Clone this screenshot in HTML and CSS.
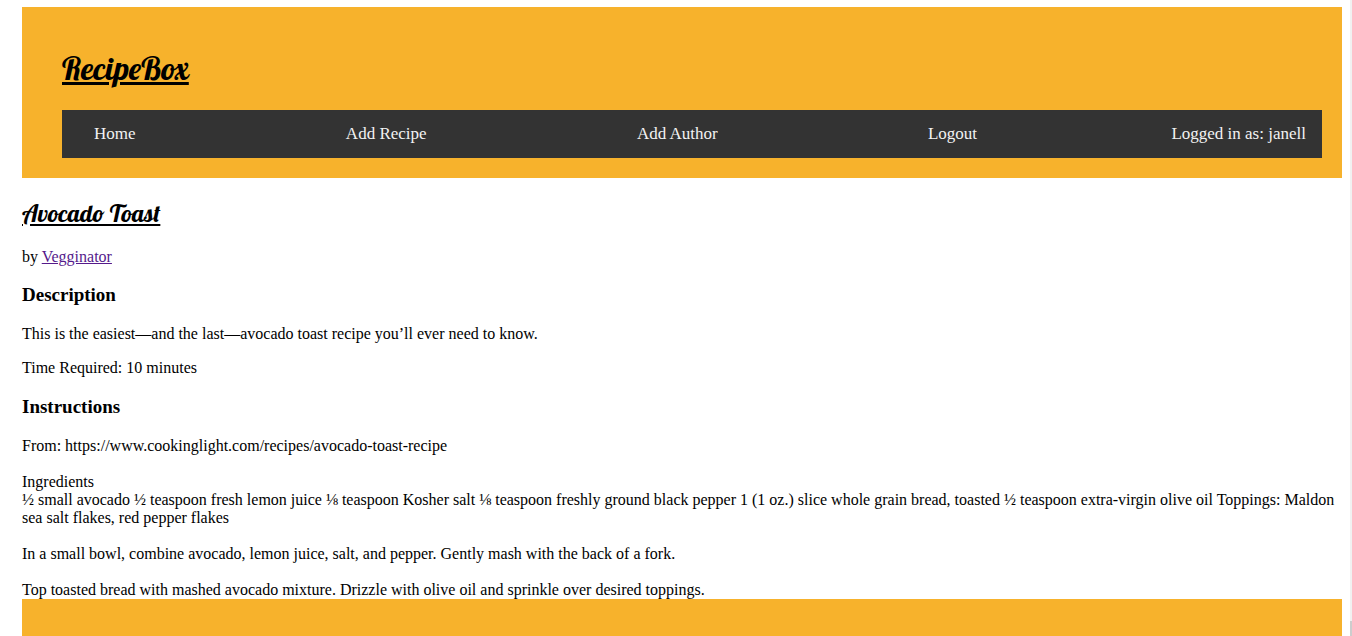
FILE: index.html
```html
<!DOCTYPE html>
<html lang="en">
<head>
<meta charset="utf-8">
<title>RecipeBox</title>
<link rel="stylesheet" href="styles.css">
</head>
<body>
<header class="banner">
  <h1 class="brand">RecipeBox</h1>
  <nav class="nav">
    <a class="nav-link" href="#">Home</a>
    <a class="nav-link" href="#">Add Recipe</a>
    <a class="nav-link" href="#">Add Author</a>
    <a class="nav-link" href="#">Logout</a>
    <span class="nav-user">Logged in as: janell</span>
  </nav>
</header>
<main class="recipe">
  <h2 class="recipe-title">Avocado Toast</h2>
  <p class="text">by <a class="author" href="#">Vegginator</a></p>
  <h3 class="heading">Description</h3>
  <p class="text">This is the easiest—and the last—avocado toast recipe you’ll ever need to know.</p>
  <p class="text">Time Required: 10 minutes</p>
  <h3 class="heading">Instructions</h3>
  <div class="instructions">
    <p class="step">From: https://www.cookinglight.com/recipes/avocado-toast-recipe</p>
    <p class="step">Ingredients<br>½ small avocado ½ teaspoon fresh lemon juice ⅛ teaspoon Kosher salt ⅛ teaspoon freshly ground black pepper 1 (1 oz.) slice whole grain bread, toasted ½ teaspoon extra-virgin olive oil Toppings: Maldon sea salt flakes, red pepper flakes</p>
    <p class="step">In a small bowl, combine avocado, lemon juice, salt, and pepper. Gently mash with the back of a fork.</p>
    <p class="step">Top toasted bread with mashed avocado mixture. Drizzle with olive oil and sprinkle over desired toppings.</p>
  </div>
</main>
<footer class="footer"></footer>
<div class="scroll-track"><div class="scroll-thumb"></div></div>
</body>
</html>
```
FILE: styles.css
```css
html {
  height: 100%;
}
body {
  box-sizing: border-box;
  display: flex;
  flex-direction: column;
  min-height: 100%;
  margin: 0;
  padding: 7px 10px 0 22px;
  background: #fff;
  color: #000;
  font: 16px/18px "Liberation Serif", "Times New Roman", serif;
}
.banner {
  padding: 20px 20px 20px 40px;
  background: #f7b22c;
}
.brand,
.recipe-title {
  font-family: Lobster, "Liberation Serif", serif;
  font-weight: 400;
  text-decoration: underline;
}
.brand {
  margin: 21px 0;
  font-size: 32px;
  line-height: 41px;
}
.nav {
  display: flex;
  justify-content: space-between;
  padding-left: 16px;
  background: #333;
  color: #f2f2f2;
  font-size: 17px;
  line-height: 20px;
}
.nav-link {
  padding: 14px 16px;
  color: inherit;
  text-decoration: none;
}
.nav-user {
  padding: 14px 16px 14px 0;
}
.recipe-title {
  margin: 20px 0;
  font-size: 24px;
  line-height: 30px;
}
.text {
  margin: 16px 0;
}
.author {
  color: #551a8b;
}
.heading {
  margin: 18px 0 19px;
  font-size: 19px;
  line-height: 22px;
}
.text + .text {
  margin-bottom: 19px;
}
.step {
  margin: 0 0 18px;
}
.step:last-child {
  margin: 0;
}
.footer {
  flex: 1;
  min-height: 37px;
  background: #f7b22c;
}
.scroll-track {
  position: fixed;
  top: 0;
  right: 0;
  bottom: 0;
  display: flex;
  align-items: flex-end;
  width: 2px;
  background: #f1f1f1;
}
.scroll-thumb {
  width: 100%;
  height: 15px;
  background: #cdcdcd;
}
```
